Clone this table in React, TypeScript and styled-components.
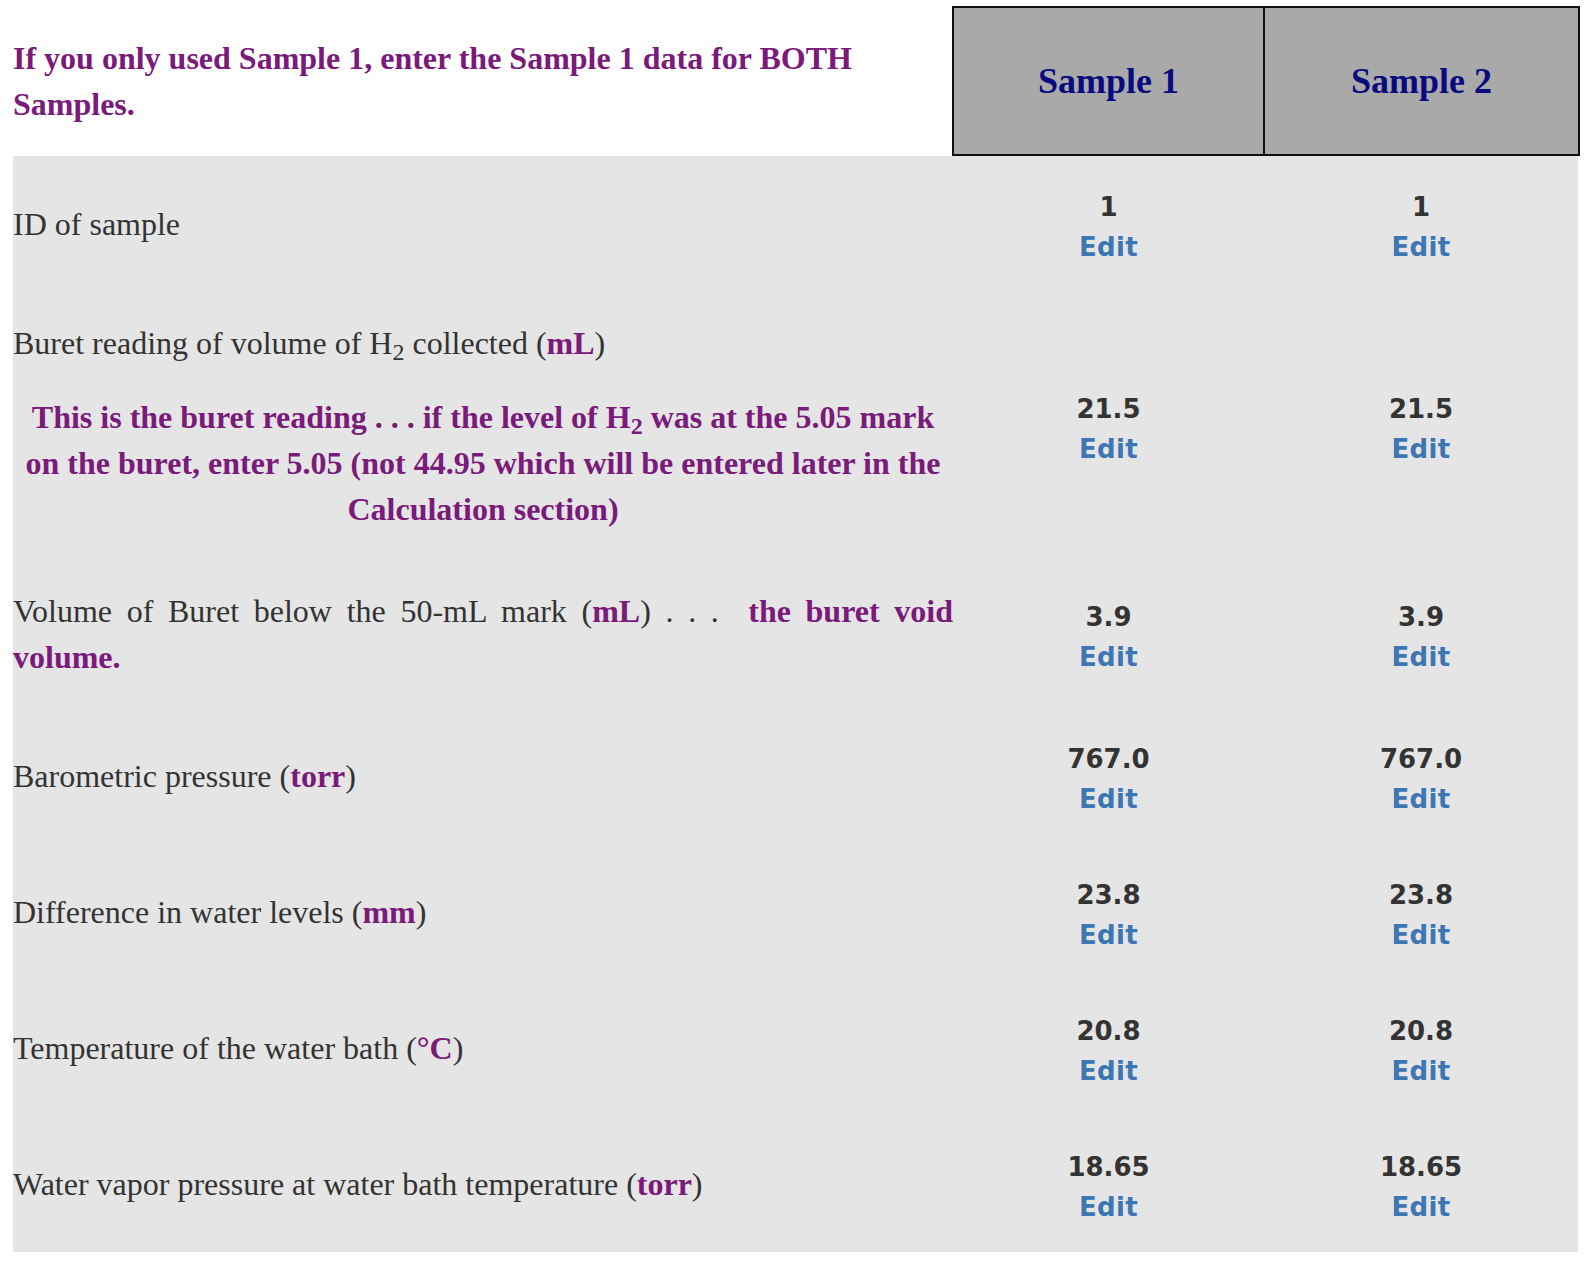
import React from "react";
import styled, { createGlobalStyle } from "styled-components";

const GlobalStyle = createGlobalStyle`
  html, body {
    margin: 0;
    padding: 0;
    background: #ffffff;
  }
  body {
    font-family: "Liberation Serif", "Times New Roman", serif;
  }
`;

const PURPLE = "#7a1a7b";
const TEXT = "#333333";

const Page = styled.div`
  padding: 6px 8px 24px 13px;
`;

const Table = styled.div`
  width: 1567px;
`;

const HeaderRow = styled.div`
  display: grid;
  grid-template-columns: 939px 313px 315px;
  align-items: center;
`;

const Notice = styled.div`
  font-family: "Liberation Serif", "Times New Roman", serif;
  font-weight: bold;
  font-size: 32px;
  line-height: 46px;
  color: ${PURPLE};
`;

const SampleHead = styled.div<{ $first?: boolean }>`
  box-sizing: border-box;
  height: 150px;
  display: flex;
  align-items: center;
  justify-content: center;
  background: #a9a9a9;
  border: 2px solid #111111;
  border-left: ${(p) => (p.$first ? "2px solid #111111" : "none")};
  font-family: "Liberation Serif", "Times New Roman", serif;
  font-weight: bold;
  font-size: 36px;
  color: #0a0a80;
`;

const Body = styled.div`
  width: 1565px;
  background: #e5e5e5;
`;

const DataRow = styled.div`
  display: grid;
  grid-template-columns: 940px 311px 314px;
  align-items: center;
  padding: 25px 0;
`;

const Label = styled.div`
  padding: 3px 0;
  font-family: "Liberation Serif", "Times New Roman", serif;
  font-size: 32px;
  line-height: 46px;
  color: ${TEXT};
  text-align: justify;

  sub {
    font-size: 0.75em;
    line-height: 0;
    vertical-align: -0.25em;
  }
`;

const Unit = styled.b`
  color: ${PURPLE};
  font-weight: bold;
`;

const Note = styled.div`
  margin-top: 28px;
  font-weight: bold;
  color: ${PURPLE};
  text-align: center;
`;

const ValueCell = styled.div`
  display: flex;
  flex-direction: column;
  align-items: center;
  padding-top: 6px;
  font-family: "DejaVu Sans", Verdana, sans-serif;
  font-weight: bold;
  font-size: 26px;
  line-height: 40px;
`;

const Value = styled.span`
  color: ${TEXT};
`;

const EditLink = styled.a`
  color: #3d76b4;
  text-decoration: none;
  letter-spacing: 0.3px;
  cursor: pointer;
`;

type RowData = {
  label: React.ReactNode;
  s1: string;
  s2: string;
};

const rows: RowData[] = [
  { label: <>ID of sample</>, s1: "1", s2: "1" },
  {
    label: (
      <>
        Buret reading of volume of H<sub>2</sub> collected (<Unit>mL</Unit>)
        <Note>
          This is the buret reading . . . if the level of H<sub>2</sub> was at
          the 5.05 mark on the buret, enter 5.05 (not 44.95 which will be
          entered later in the Calculation section)
        </Note>
      </>
    ),
    s1: "21.5",
    s2: "21.5",
  },
  {
    label: (
      <>
        Volume of Buret below the 50-mL mark (<Unit>mL</Unit>) . . .&nbsp;{" "}
        <Unit>the buret void volume.</Unit>
      </>
    ),
    s1: "3.9",
    s2: "3.9",
  },
  {
    label: (
      <>
        Barometric pressure (<Unit>torr</Unit>)
      </>
    ),
    s1: "767.0",
    s2: "767.0",
  },
  {
    label: (
      <>
        Difference in water levels (<Unit>mm</Unit>)
      </>
    ),
    s1: "23.8",
    s2: "23.8",
  },
  {
    label: (
      <>
        Temperature of the water bath (<Unit>°C</Unit>)
      </>
    ),
    s1: "20.8",
    s2: "20.8",
  },
  {
    label: (
      <>
        Water vapor pressure at water bath temperature (<Unit>torr</Unit>)
      </>
    ),
    s1: "18.65",
    s2: "18.65",
  },
];

const Cell: React.FC<{ value: string }> = ({ value }) => (
  <ValueCell>
    <Value>{value}</Value>
    <EditLink>Edit</EditLink>
  </ValueCell>
);

export default function App() {
  return (
    <Page>
      <GlobalStyle />
      <Table>
        <HeaderRow>
          <Notice>
            If you only used Sample 1, enter the Sample 1 data for BOTH
            Samples.
          </Notice>
          <SampleHead $first>Sample 1</SampleHead>
          <SampleHead>Sample 2</SampleHead>
        </HeaderRow>
        <Body>
          {rows.map((r, i) => (
            <DataRow key={i}>
              <Label>{r.label}</Label>
              <Cell value={r.s1} />
              <Cell value={r.s2} />
            </DataRow>
          ))}
        </Body>
      </Table>
    </Page>
  );
}
